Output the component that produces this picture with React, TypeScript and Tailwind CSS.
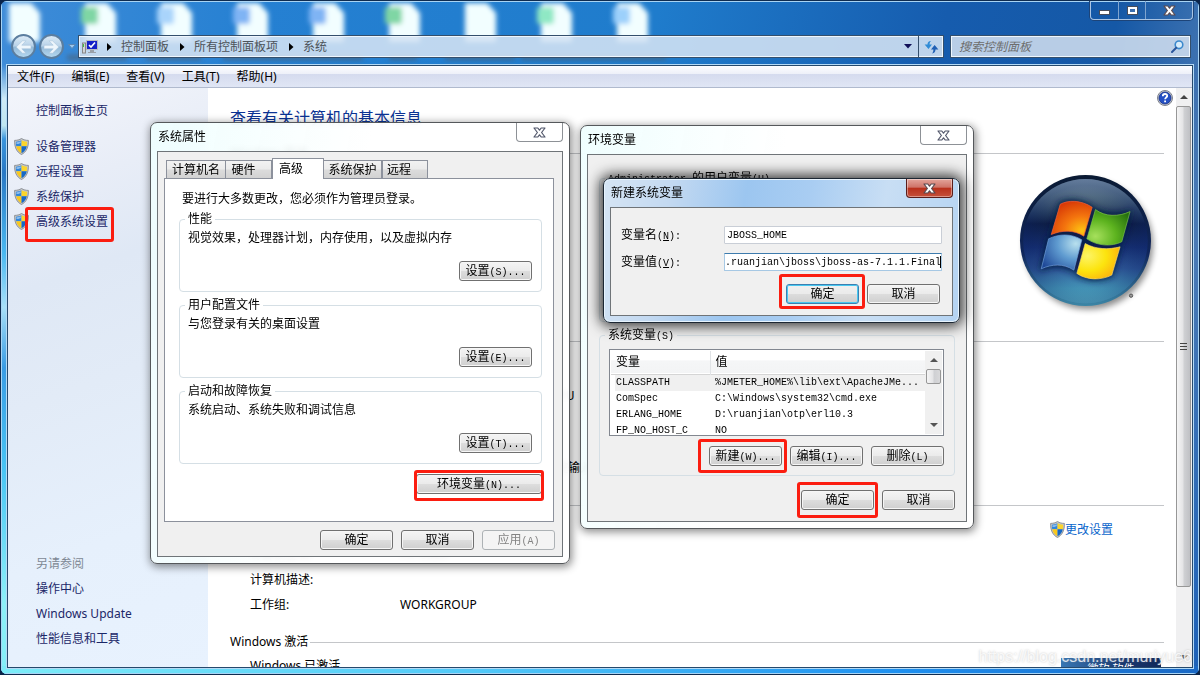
import React from "react";

const SONG = "font-['Liberation_Mono','Noto_Sans_CJK_SC',monospace]";

/* Chinese runs are 12px, Latin runs are half-width (6px per letter). */
function Song({ children }: { children: string }) {
  const parts = children.split(/([\x20-\x7e]+)/).filter(Boolean);
  return (
    <span className="whitespace-pre">
      {parts.map((part, i) =>
        /^[\x20-\x7e]/.test(part) ? (
          <span key={i} className={`text-[10px] leading-none ${SONG}`}>
            {part}
          </span>
        ) : (
          <span key={i}>{part}</span>
        ),
      )}
    </span>
  );
}

function Mark({ className }: { className: string }) {
  return (
    <span
      aria-hidden="true"
      className={`pointer-events-none absolute z-10 rounded-[3px] border-3 border-[#fb1d10] ${className}`}
    />
  );
}

type PushProps = {
  children: string;
  wide?: boolean;
  primary?: boolean;
  disabled?: boolean;
  mark?: string;
};

function Push({ children, wide, primary, disabled, mark }: PushProps) {
  const tone = disabled
    ? "border-[#adb2b5] bg-[#f4f4f4] text-[#838383]"
    : primary
      ? "border-[#3c7fb1] bg-[linear-gradient(#f0f0f0_0%,#ebebeb_48%,#dcdcdc_52%,#cfcfcf_100%)] text-black shadow-[inset_0_0_0_1px_#48c8f0]"
      : "border-[#707070] bg-[linear-gradient(#f4f4f4_0%,#ebebeb_48%,#dddddd_52%,#cfcfcf_100%)] text-black shadow-[inset_0_0_0_1px_#f6f6f6]";
  return (
    <span className="relative flex">
      <button
        type="button"
        disabled={disabled}
        className={`flex h-5 items-center justify-center rounded-[3px] border ${wide ? "w-[126px]" : "w-[73px]"} ${tone}`}
      >
        <Song>{children}</Song>
      </button>
      {mark && <Mark className={mark} />}
    </span>
  );
}

function Shield() {
  return (
    <svg width="15" height="17" viewBox="0 0 15 17" className="shrink-0" aria-hidden="true">
      <path d="M7.500 .5C9.500 1.800 12 2.400 14.400 2.400C14.600 9 12.500 14 7.500 16.500C2.500 14 .4 9 .6 2.400C3 2.400 5.500 1.800 7.500 .5Z" fill="#c3c6ca" stroke="#7d8287" strokeWidth=".8" />
      <path d="M7.500 2.200V8.300H2.200C1.900 6.800 1.800 5.300 1.900 3.700C4 3.600 6 3 7.500 2.200Z" fill="#2f86dc" />
      <path d="M7.500 2.200V8.300H12.800C13.100 6.800 13.200 5.300 13.100 3.700C11 3.600 9 3 7.500 2.200Z" fill="#fbd52c" />
      <path d="M7.500 8.300H2.200C2.900 11.400 4.500 13.700 7.500 15.200Z" fill="#f9c81d" />
      <path d="M7.500 8.300H12.800C12.100 11.400 10.500 13.700 7.500 15.200Z" fill="#1668c6" />
      <path d="M2.500 4.300C4 4.200 5.500 3.800 6.800 3.200V5C5 6 3.500 6 2.400 6Z" fill="#fff" opacity=".45" />
    </svg>
  );
}

function CloseGlyph({ dark }: { dark?: boolean }) {
  return (
    <svg width="13" height="11" viewBox="0 0 13 11" aria-hidden="true">
      <path
        d="M1 1H4.800L6.500 3.200L8.200 1H12L8.600 5.500L12 10H8.200L6.500 7.800L4.800 10H1L4.400 5.500Z"
        fill="#fdfdfd"
        stroke={dark ? "#5a4a50" : "#51566a"}
        strokeWidth="1.200"
        strokeLinejoin="round"
      />
    </svg>
  );
}

function WindowsLogo() {
  return (
    <svg width="133" height="137" viewBox="175 40 400 412" role="img" aria-label="Windows" className="shrink-0 overflow-visible">
      <defs>
        <linearGradient id="orb" x1="0" y1="0" x2="0" y2="1">
          <stop offset="0" stopColor="#93acb8" />
          <stop offset=".14" stopColor="#627d8b" />
          <stop offset=".27" stopColor="#2a4360" />
          <stop offset=".36" stopColor="#0d1e44" />
          <stop offset=".55" stopColor="#152f72" />
          <stop offset=".72" stopColor="#2c5596" />
          <stop offset=".88" stopColor="#4597b9" />
          <stop offset="1" stopColor="#58b0c6" />
        </linearGradient>
        <linearGradient id="rim" x1="0" y1="0" x2="0" y2="1">
          <stop offset="0" stopColor="#0a1a33" />
          <stop offset=".6" stopColor="#10265c" />
          <stop offset="1" stopColor="#3c86a6" />
        </linearGradient>
        <radialGradient id="sides" cx=".5" cy=".55" r=".5">
          <stop offset=".6" stopColor="#0c1e5a" stopOpacity="0" />
          <stop offset="1" stopColor="#0c2266" stopOpacity=".35" />
        </radialGradient>
        <radialGradient id="red" cx=".75" cy=".85" r=".95">
          <stop offset="0" stopColor="#fdc513" />
          <stop offset=".45" stopColor="#f4750e" />
          <stop offset="1" stopColor="#d43206" />
        </radialGradient>
        <radialGradient id="green" cx=".2" cy=".75" r=".95">
          <stop offset="0" stopColor="#a6e05c" />
          <stop offset=".5" stopColor="#5db31f" />
          <stop offset="1" stopColor="#25700e" />
        </radialGradient>
        <radialGradient id="blue" cx=".85" cy=".25" r="1">
          <stop offset="0" stopColor="#b8e0ee" />
          <stop offset=".45" stopColor="#5f9bd0" />
          <stop offset="1" stopColor="#1e4797" />
        </radialGradient>
        <radialGradient id="yellow" cx=".25" cy=".35" r=".95">
          <stop offset="0" stopColor="#fdf466" />
          <stop offset=".45" stopColor="#fce40e" />
          <stop offset="1" stopColor="#fb9b0c" />
        </radialGradient>
        <filter id="soft" x="-20%" y="-20%" width="140%" height="140%">
          <feGaussianBlur stdDeviation="10" />
        </filter>
      </defs>
      <circle cx="384" cy="256" r="194" fill="#000" opacity=".45" filter="url(#soft)" />
      <circle cx="375" cy="243" r="197" fill="url(#rim)" />
      <circle cx="375" cy="245" r="187" fill="url(#orb)" />
      <circle cx="375" cy="245" r="187" fill="url(#sides)" />
      <g stroke="#0b1b46" strokeOpacity=".55" strokeWidth="14" strokeLinejoin="round" filter="url(#soft)" fill="#0b1b46">
        <path d="M299 131Q345 112 395 143L370 230Q325 206 272 225Z" />
        <path d="M403 150Q455 178 509 156L484 247Q430 268 379 238Z" />
        <path d="M264 236Q315 214 364 241L340 332Q290 306 242 328Z" />
        <path d="M374 252Q425 277 479 262L454 347Q400 374 349 342Z" />
      </g>
      <path d="M299 134C322 121 362 121 395 143L370 230C342 211 305 211 272 225Z" fill="url(#red)" stroke="#f8603a" strokeWidth="2" />
      <path d="M405 150C434 172 474 172 509 156L484 247C452 262 412 260 379 238Z" fill="url(#green)" stroke="#7cc54a" strokeWidth="2" />
      <path d="M264 238C296 222 334 222 364 241L340 332C308 311 274 314 242 328Z" fill="url(#blue)" stroke="#6fa2de" strokeWidth="2" />
      <path d="M374 252C404 270 446 271 479 262L454 347C420 364 378 362 349 342Z" fill="url(#yellow)" stroke="#f8d868" strokeWidth="2" />
      <circle cx="512" cy="409" r="5" fill="#999" stroke="#444" strokeWidth="2.500" />
    </svg>
  );
}

/* Desktop icons seen through the frosted title bar and frame. */
function Backdrop() {
  const files = [
    [8, ""],
    [84, "#7fd6a4"],
    [160, "#a9d4fb"],
    [236, "#7fb4f4"],
    [312, "#7fb4f4"],
    [388, "#7fd6a4"],
    [464, ""],
    [540, "#8fe8c4"],
    [616, "#9cd0fb"],
  ] as const;
  return (
    <svg className="absolute inset-0 h-full w-full" aria-hidden="true">
      <defs>
        <filter id="frost" x="-20%" y="-20%" width="140%" height="140%">
          <feGaussianBlur stdDeviation="2.500" />
        </filter>
        <linearGradient id="edge" x1="0" y1="0" x2="0" y2="1">
          <stop offset="0" stopColor="#3f8cd8" />
          <stop offset=".05" stopColor="#cfeaf6" />
          <stop offset=".09" stopColor="#bfe6f0" />
          <stop offset=".11" stopColor="#3a94dc" />
          <stop offset=".16" stopColor="#2a78c4" />
          <stop offset=".28" stopColor="#4ab8f0" />
          <stop offset=".36" stopColor="#a8e0f8" />
          <stop offset=".45" stopColor="#3a9ce4" />
          <stop offset=".6" stopColor="#48c4f4" />
          <stop offset=".8" stopColor="#8cf0f8" />
          <stop offset="1" stopColor="#7cecf8" />
        </linearGradient>
        <linearGradient id="foot" x1="0" y1="0" x2="1" y2="0">
          <stop offset="0" stopColor="#7cecf8" />
          <stop offset=".4" stopColor="#50c8f8" />
          <stop offset=".75" stopColor="#1e90f0" />
          <stop offset="1" stopColor="#1a68c4" />
        </linearGradient>
      </defs>
      <rect x="0" y="64" width="8" height="100%" fill="url(#edge)" />
      <svg y="100%" overflow="visible">
        <rect y="-8" width="100%" height="8" fill="url(#foot)" />
      </svg>
      <g filter="url(#frost)">
        {files.map(([x, badge]) => (
          <g key={x}>
            <path d={`M${x} 2H${x + 22}L${x + 31} 12V41H${x}Z`} fill="#f2feff" />
            {badge && <rect x={x - 4} y="6" width="17" height="17" rx="3" fill={badge} />}
          </g>
        ))}
        <g fill="#4e5c6c" opacity=".65">
          <rect x="66" y="54" width="60" height="5" />
          <rect x="145" y="54" width="55" height="5" />
          <rect x="222" y="54" width="140" height="5" />
          <rect x="388" y="54" width="28" height="5" />
          <rect x="444" y="54" width="70" height="5" />
          <rect x="520" y="54" width="145" height="5" />
        </g>
      </g>
    </svg>
  );
}

function TitleBar() {
  const nav =
    "flex size-[25px] items-center justify-center rounded-full border-2 border-[#5c7e9f] bg-[linear-gradient(#dbeaf6_0%,#b8d2e8_48%,#93b8d6_52%,#b4d8f0_100%)]";
  return (
    <header className="flex h-16 shrink-0 flex-col">
      <div className="flex h-[33px] items-start justify-end">
        <div className="flex h-[19px] rounded-b-[4px] border border-t-0 border-[#a9c4e4] shadow-[0_0_0_1px_#1d4478]">
          <button type="button" aria-label="最小化" className="flex w-7 items-center justify-center border-r border-[#7fa4cf]">
            <span className="mt-1 h-[5px] w-[11px] border border-[#474d5c] bg-white" />
          </button>
          <button type="button" aria-label="最大化" className="flex w-[27px] items-center justify-center border-r border-[#7fa4cf]">
            <span className="h-[9px] w-[11px] border border-[#474d5c] bg-[#3b6fb0] shadow-[inset_0_0_0_2px_#fff]" />
          </button>
          <button type="button" aria-label="关闭" className="flex w-[46px] items-center justify-center">
            <CloseGlyph dark />
          </button>
        </div>
      </div>
      <div className="flex items-center pr-0.5 pl-1">
        <div className="flex w-[67px] items-center">
          <button type="button" aria-label="后退" className={nav}>
            <NavArrow />
          </button>
          <button type="button" aria-label="前进" className={`ml-[3px] ${nav}`}>
            <NavArrow flip />
          </button>
          <svg width="8" height="5" viewBox="0 0 8 5" className="ml-1" aria-hidden="true">
            <path d="M.5 .5H7.500L4 4.500Z" fill="#9cc8ee" stroke="#5a86b4" />
          </svg>
        </div>
        <div className="flex h-[23px] min-w-0 flex-1 items-center border border-[#344f6c] bg-[#d5e4f4]/88 pl-[3px] text-[#4d5359] shadow-[inset_0_0_0_1px_#eef6fd]">
          <svg width="17" height="15" viewBox="0 0 17 15" aria-hidden="true">
            <rect x=".5" y="4" width="3" height="10" fill="#d0d4d8" stroke="#888" />
            <rect x="1" y="5" width="1" height="3" fill="#3fc040" />
            <rect x="4.500" y="1.500" width="11" height="9" fill="#1420c8" stroke="#b8bcc4" />
            <path d="M7 6L9 8L13 3.500" fill="none" stroke="#fff" strokeWidth="1.600" />
            <path d="M8 11H12V13H14V14H6V13H8Z" fill="#9aa0a8" />
          </svg>
          <Crumb>控制面板</Crumb>
          <Crumb>所有控制面板项</Crumb>
          <Crumb>系统</Crumb>
          <button type="button" aria-label="历史记录" className="mr-1.5 ml-auto">
            <svg width="8" height="5" viewBox="0 0 8 5" aria-hidden="true">
              <path d="M0 0H8L4 4.500Z" fill="#101058" />
            </svg>
          </button>
          <button type="button" aria-label="刷新" className="flex h-full w-[25px] items-center justify-center border-l border-[#344f6c]">
            <svg width="15" height="14" viewBox="0 0 15 14" aria-hidden="true">
              <path d="M7 1C4.500 1.200 3.600 2.400 3.500 4.500H.6L4.500 9L8 4.500H5.600C5.600 3 6 2 7 1Z" fill="#2f8bd6" />
              <path d="M8 13.500C10.500 13 11.400 11.800 11.500 9.500H14.400L10.600 5L7 9.500H9.400C9.400 11 9 12.500 8 13.500Z" fill="#1f5fb4" />
            </svg>
          </button>
        </div>
        <label className="ml-1.5 flex h-[23px] w-[241px] items-center border border-[#344f6c] bg-[#d5e2f1]/85 pr-1.5 pl-2 shadow-[inset_0_0_0_1px_#eef6fd]">
          <input
            type="search"
            aria-label="搜索控制面板"
            placeholder="搜索控制面板"
            className="min-w-0 flex-1 bg-transparent italic outline-none placeholder:text-[#6d6d6d]"
          />
          <svg width="13" height="13" viewBox="0 0 13 13" aria-hidden="true">
            <circle cx="8" cy="4.800" r="3.800" fill="#d8ecfa" stroke="#3b88cc" strokeWidth="1.600" />
            <path d="M5.200 7.800L1 12" stroke="#2b569c" strokeWidth="2" strokeLinecap="round" />
          </svg>
        </label>
      </div>
    </header>
  );
}

function NavArrow({ flip }: { flip?: boolean }) {
  return (
    <svg width="17" height="14" viewBox="0 0 17 14" className={flip ? "rotate-180" : ""} aria-hidden="true">
      <path d="M7.500 .8L1.200 7L7.500 13.200H11L6.800 8.800H16V5.200H6.800L11 .8Z" fill="#eef6fc" stroke="#a9c4dc" strokeWidth=".6" />
    </svg>
  );
}

function Crumb({ children }: { children: string }) {
  return (
    <>
      <svg width="5" height="8" viewBox="0 0 5 8" className="mr-[9px] ml-[8px]" aria-hidden="true">
        <path d="M0 0V8L4.500 4Z" fill="#000" />
      </svg>
      <a href="#" className="mr-[3px] leading-4 whitespace-nowrap">
        {children}
      </a>
    </>
  );
}

function Sidebar() {
  const tasks = ["设备管理器", "远程设置", "系统保护", "高级系统设置"];
  const related = ["操作中心", "Windows Update", "性能信息和工具"];
  return (
    <nav className="flex w-[200px] shrink-0 flex-col bg-[linear-gradient(160deg,#f3f5fb_0%,#e8edf7_18%,#dfe8f5_32%,#e2ebf7_50%,#e6f0fc_75%,#e8f2fe_100%)] pt-[10px] pb-4 leading-[25px] text-[#1b2768]">
      <a href="#" className="pl-7">
        控制面板主页
      </a>
      <ul className="mt-[11px]">
        {tasks.map((task, i) => (
          <li key={task} className="flex items-center pl-1.5">
            <Shield />
            <a href="#" className="relative pl-[7px]">
              {task}
              {i === 3 && <Mark className="-top-0.5 -right-1.5 -bottom-2 -left-1" />}
            </a>
          </li>
        ))}
      </ul>
      <div className="mt-auto pl-7">
        <h2 className="text-[#7e8894]">另请参阅</h2>
        <ul>
          {related.map((item) => (
            <li key={item}>
              <a href="#">{item}</a>
            </li>
          ))}
        </ul>
      </div>
    </nav>
  );
}

function SectionTitle({ children }: { children: string }) {
  return (
    <h2 className="flex h-6 items-center gap-0.5 leading-4 whitespace-nowrap">
      {children}
      <span className="h-px flex-1 bg-[#c4c6c9]" />
    </h2>
  );
}

function Fact({ name, value, action }: { name: string; value?: string; action?: React.ReactNode }) {
  return (
    <div className="flex pl-5 whitespace-nowrap">
      <dt className="w-[150px] shrink-0">{name}</dt>
      <dd className="flex flex-1 justify-between">
        <span>{value}</span>
        {action}
      </dd>
    </div>
  );
}

function SystemInfo() {
  return (
    <main className="relative min-w-0 flex-1 overflow-hidden bg-white pr-3 pl-[22px] text-black">
      <a href="#" aria-label="帮助" className="absolute top-[2px] right-[3px]">
        <svg width="16" height="16" viewBox="0 0 16 16" aria-hidden="true">
          <circle cx="8" cy="8" r="7.500" fill="#c9cdd6" stroke="#7d818b" />
          <circle cx="8" cy="8" r="6" fill="#2450c4" stroke="#152f84" strokeWidth=".8" />
          <path d="M5.800 6.200C5.800 3.200 10.400 3.400 10.200 6C10 7.400 8.200 7.500 8.100 9.300M8.100 10.600V12.200" fill="none" stroke="#fff" strokeWidth="1.800" />
        </svg>
      </a>
      <h1 className="mt-[18px] text-base leading-6 text-[#0b3394]">查看有关计算机的基本信息</h1>
      <section className="mt-[11px] min-h-[188px]">
        <SectionTitle>Windows 版本</SectionTitle>
        <div className="mt-2 flex justify-between pr-3 pl-5">
          <p className="leading-6">Windows 7 旗舰版</p>
          <WindowsLogo />
        </div>
      </section>
      <section className="min-h-[164px]">
        <SectionTitle>系统</SectionTitle>
        <dl className="mt-[7px] leading-6">
          <Fact name="分级:" value="系统分级不可用" />
          <Fact name="处理器:" value="Intel(R) Core(TM) i5-4210U CPU" />
          <Fact name="安装内存(RAM):" value="8.00 GB" />
          <Fact name="系统类型:" value="64 位操作系统" />
          <Fact name="笔和触摸:" value="没有可用于此显示器的笔或触控输入" />
        </dl>
      </section>
      <section className="min-h-[137px]">
        <SectionTitle>计算机名称、域和工作组设置</SectionTitle>
        <dl className="leading-[25px]">
          <Fact
            name="计算机名:"
            action={
              <a href="#" className="mr-[51px] flex items-center text-[#0a66cc]">
                <Shield />
                更改设置
              </a>
            }
          />
          <Fact name="计算机全名:" value="PC-USER" />
          <Fact name="计算机描述:" />
          <Fact name="工作组:" value="WORKGROUP" />
        </dl>
      </section>
      <section>
        <SectionTitle>Windows 激活</SectionTitle>
        <div className="flex items-start justify-between pr-[3px] pl-5">
          <p className="leading-6">Windows 已激活</p>
          <div className="mt-1 flex h-6 w-[100px] justify-center bg-[linear-gradient(90deg,#3877b4,#1b3b72_60%,#10285a)] pt-[3px] text-[11px] leading-4 text-white">
            微软·软件
          </div>
        </div>
      </section>
    </main>
  );
}

function PageScrollbar() {
  return (
    <div aria-hidden="true" className="flex w-4 shrink-0 flex-col items-center bg-[#f0f0f1] pr-px">
      <span className="mt-[7px] border-x-4 border-b-4 border-x-transparent border-b-[#444]" />
      <span className="mt-[7px] flex h-[481px] w-[15px] flex-col items-center justify-center gap-0.5 rounded-[2px] border border-[#979797] bg-[linear-gradient(90deg,#f5f5f5,#e4e4e6_45%,#cfd0d3_55%,#bfc0c4)]">
        <i className="h-px w-[7px] bg-[#444]" />
        <i className="h-px w-[7px] bg-[#444]" />
        <i className="h-px w-[7px] bg-[#444]" />
      </span>
      <span className="mt-auto mb-2 border-x-4 border-t-4 border-x-transparent border-t-[#444]" />
    </div>
  );
}

type DialogProps = {
  title: string;
  place: string;
  active?: boolean;
  children: React.ReactNode;
};

function DialogWindow({ title, place, active, children }: DialogProps) {
  const skin = active
    ? "border-[#1c2733] bg-[linear-gradient(100deg,#d6e5f4_0%,#c3d9f1_18%,#9cc6f0_38%,#a9cdf2_55%,#c8def4_75%,#b4d3f2_100%)] shadow-[0_0_14px_3px_rgba(0,0,0,0.8),inset_0_0_0_1px_#e8f4fd]"
    : "border-[#55585b] bg-[linear-gradient(100deg,rgba(238,254,254,0.9),rgba(255,255,255,0.92)_45%)] shadow-[1px_2px_8px_1px_rgba(0,0,0,0.45)] backdrop-blur-[3px]";
  return (
    <section role="dialog" aria-label={title} className={`absolute rounded-[7px] border px-1.5 pb-1.5 ${skin} ${place}`}>
      <header className="flex h-[28px] items-center justify-between pl-px">
        <h2>{title}</h2>
        <button
          type="button"
          aria-label="关闭"
          className={`flex h-[19px] w-[47px] items-center justify-center self-start rounded-b-[4px] border border-t-0 ${
            active
              ? "border-[#5a1d1a] bg-[linear-gradient(#e3a59b_0%,#cf7468_45%,#b9311c_52%,#c5503a_100%)] shadow-[inset_0_0_0_1px_rgba(255,255,255,0.4)]"
              : "border-[#8d9196] bg-white/60"
          }`}
        >
          <CloseGlyph dark={active} />
        </button>
      </header>
      <div className="border border-[#6f7478] bg-[#f0f0f0]">{children}</div>
    </section>
  );
}

function Group({ title, className, children }: { title: string; className: string; children?: React.ReactNode }) {
  return (
    <fieldset className={`min-w-0 rounded-[4px] border border-[#d5dfe5] ${className}`}>
      <legend className="h-[14px] px-[3px] leading-[14px]">
        <Song>{title}</Song>
      </legend>
      {children}
    </fieldset>
  );
}

function SystemProperties() {
  const groups = [
    ["性能", "视觉效果，处理器计划，内存使用，以及虚拟内存", "设置(S)..."],
    ["用户配置文件", "与您登录有关的桌面设置", "设置(E)..."],
    ["启动和故障恢复", "系统启动、系统失败和调试信息", "设置(T)..."],
  ];
  const tab = "h-[18px] border border-b-0 border-[#8c919c] bg-[linear-gradient(#f2f2f2_0%,#ebebeb_48%,#dcdcdc_52%,#d2d2d2_100%)]";
  return (
    <DialogWindow title="系统属性" place="top-[122px] left-[150px] w-[420px]">
      <div className="pt-1.5 pr-[7px] pb-1.5 pl-1.5">
        <div role="tablist" className="flex items-end pl-0.5 leading-4">
          <button type="button" role="tab" className={`w-[60px] ${tab}`}>计算机名</button>
          <button type="button" role="tab" className={`w-[46px] border-l-0 pr-2.5 ${tab}`}>硬件</button>
          <button
            type="button"
            role="tab"
            aria-selected="true"
            className="-mb-px h-[21px] w-[52px] border border-b-0 border-[#8c919c] bg-white pr-3.5 pb-px"
          >
            高级
          </button>
          <button type="button" role="tab" className={`w-[58px] border-l-0 ${tab}`}>系统保护</button>
          <button type="button" role="tab" className={`w-[46px] pr-3 ${tab}`}>远程</button>
        </div>
        <div role="tabpanel" className="mr-px border border-[#8c919c] bg-white pt-3 pr-[11px] pb-[27px] pl-3.5">
          <p className="mb-[5px] pl-[3px] leading-4">要进行大多数更改，您必须作为管理员登录。</p>
          <div className="flex flex-col gap-1.5">
            {groups.map(([title, text, button]) => (
              <Group key={title} title={title} className="pr-[9px] pb-2.5 pl-[5px]">
                <p className="pt-px pl-[3px] leading-[22px]">{text}</p>
                <div className="mt-3 flex justify-end">
                  <Push>{button}</Push>
                </div>
              </Group>
            ))}
          </div>
          <div className="mt-2.5 flex justify-end">
            <Push wide mark="-top-1 -right-0.5 -bottom-[7px] -left-0.5">
              环境变量(N)...
            </Push>
          </div>
        </div>
        <div className="mt-2 flex justify-end gap-2">
          <Push>确定</Push>
          <Push>取消</Push>
          <Push disabled>应用(A)</Push>
        </div>
      </div>
    </DialogWindow>
  );
}

function VariableList() {
  const rows = [
    ["CLASSPATH", "%JMETER_HOME%\\lib\\ext\\ApacheJMe..."],
    ["ComSpec", "C:\\Windows\\system32\\cmd.exe"],
    ["ERLANG_HOME", "D:\\ruanjian\\otp\\erl10.3"],
    ["FP_NO_HOST_C", "NO"],
  ];
  const cell = `overflow-hidden p-0 pl-[5px] text-[10px] leading-4 whitespace-nowrap ${SONG}`;
  return (
    <div className="flex h-[87px] overflow-hidden border border-[#828790] bg-white p-px">
      <div className="min-w-0 flex-1 overflow-hidden">
        <table className="w-full table-fixed border-collapse text-left">
          <thead>
            <tr className="h-[23px] border-b border-[#d5d5d5] bg-[linear-gradient(#fff_40%,#f5f6f7_45%,#f3f4f5)]">
              <th className="w-[99px] border-r border-[#e0e3e6] py-0 pl-[5px] leading-4 font-normal">变量</th>
              <th className="py-0 pl-[5px] leading-4 font-normal">值</th>
            </tr>
          </thead>
          <tbody>
            {rows.map(([name, value], i) => (
              <tr key={name} className={`h-4 ${i === 0 ? "bg-[linear-gradient(90deg,#fff_4px,#f0f0f0_4px)]" : ""}`}>
                <td className={cell}>{name}</td>
                <td className={cell}>{value}</td>
              </tr>
            ))}
          </tbody>
        </table>
      </div>
      <div aria-hidden="true" className="flex w-[17px] flex-col items-center bg-[#f0f0f0]">
        <span className="mt-[7px] border-x-4 border-b-4 border-x-transparent border-b-[#555]" />
        <span className="mt-[7px] h-[15px] w-[15px] rounded-[2px] border border-[#979797] bg-[linear-gradient(90deg,#f5f5f5,#e4e4e6_45%,#cfd0d3_55%,#d8d8da)]" />
        <span className="mt-auto mb-[7px] border-x-4 border-t-4 border-x-transparent border-t-[#555]" />
      </div>
    </div>
  );
}

function EnvironmentVariables() {
  return (
    <DialogWindow title="环境变量" place="top-[125px] left-[580px] w-[394px]">
      <div className="px-[11px] pt-4 pb-[11px]">
        <Group title="Administrator 的用户变量(U)" className="h-[151px] px-[5px]">
          <div className="mt-2 h-[87px] border border-[#828790] bg-white">
            <div className="flex h-[23px] items-center gap-[74px] pl-1.5">
              <span>变量</span>
              <span>值</span>
            </div>
          </div>
        </Group>
        <Group title="系统变量(S)" className="mt-1.5 pr-2.5 pb-[9px] pl-[5px]">
          <div className="mt-[7px] pl-1">
            <VariableList />
          </div>
          <div className="mt-2.5 flex justify-end gap-2">
            <Push mark="-top-[7px] -right-[5px] -bottom-[7px] -left-[11px]">新建(W)...</Push>
            <Push>编辑(I)...</Push>
            <Push>删除(L)</Push>
          </div>
        </Group>
        <div className="mt-3.5 flex justify-end gap-2">
          <Push mark="-inset-x-1 -inset-y-2">确定</Push>
          <Push>取消</Push>
        </div>
      </div>
    </DialogWindow>
  );
}

function NewVariable() {
  const field = `h-[18px] w-full rounded-[1px] border bg-white text-[10px] text-black outline-none ${SONG}`;
  return (
    <DialogWindow active title="新建系统变量" place="top-[178px] left-[603px] w-[357px]">
      <form className="pt-[18px] pr-2.5 pb-[11px] pl-2.5">
        <div className="flex items-center">
          <label htmlFor="variable-name" className="w-[103px]">
            变量名<span className={`text-[10px] ${SONG}`}>(<u>N</u>):</span>
          </label>
          <div className="flex flex-1">
            <input id="variable-name" defaultValue="JBOSS_HOME" className={`border-[#c9ced6] px-0.5 ${field}`} />
          </div>
        </div>
        <div className="mt-[9px] flex items-center">
          <label htmlFor="variable-value" className="w-[103px]">
            变量值<span className={`text-[10px] ${SONG}`}>(<u>V</u>):</span>
          </label>
          <div className="relative flex flex-1">
            <input
              id="variable-value"
              defaultValue=".ruanjian\jboss\jboss-as-7.1.1.Final"
              className={`border-[#a6c8e4] border-t-[#3d7bad] ${field}`}
            />
            <span aria-hidden="true" className="absolute top-[3px] right-px h-3 w-px bg-black" />
          </div>
        </div>
        <div className="mt-[13px] flex justify-end gap-2 pr-0.5">
          <Push primary mark="-top-2.5 -right-1.5 -bottom-[5px] -left-[7px]">
            确定
          </Push>
          <Push>取消</Push>
        </div>
      </form>
    </DialogWindow>
  );
}

export default function App() {
  const menus = ["文件(F)", "编辑(E)", "查看(V)", "工具(T)", "帮助(H)"];
  return (
    <div className="relative h-screen min-h-[600px] overflow-hidden bg-[#0a2348] font-['Noto_Sans','Noto_Sans_CJK_SC',sans-serif] text-xs text-black">
      <div className="relative h-full overflow-hidden rounded-[7px] border border-[#0f2c50] bg-[linear-gradient(100deg,#3f8cd8_0%,#2580d2_20%,#1f7ccc_50%,#165cae_72%,#1558a6_85%,#4a7ab4_94%,#1a60b8_100%)]">
        <Backdrop />
        <div className="relative flex h-full flex-col px-1.5 pb-1.5 shadow-[inset_0_0_0_1px_#a8d4f4]">
          <TitleBar />
          <div className="flex min-h-0 flex-1 flex-col border border-[#26496c] shadow-[0_0_0_1px_#b4daf6]">
            <ul className="flex h-[22px] shrink-0 items-center gap-[17px] border-b border-[#b0bace] bg-[linear-gradient(#fdfdff_0%,#eef1f9_36%,#d5dbee_38%,#e0e6f5_100%)] pl-[9px]">
              {menus.map((menu) => (
                <li key={menu}>
                  <button type="button" className="leading-4">
                    {menu}
                  </button>
                </li>
              ))}
            </ul>
            <div className="flex min-h-0 flex-1">
              <Sidebar />
              <SystemInfo />
              <PageScrollbar />
            </div>
          </div>
        </div>
      </div>
      <SystemProperties />
      <EnvironmentVariables />
      <NewVariable />
      <p className="absolute right-2 bottom-1.5 font-['Liberation_Sans',sans-serif] text-base leading-6 text-white/80 [text-shadow:0_0_2px_rgba(140,140,140,0.5)]">
        https://blog.csdn.net/muriyue6
      </p>
    </div>
  );
}
